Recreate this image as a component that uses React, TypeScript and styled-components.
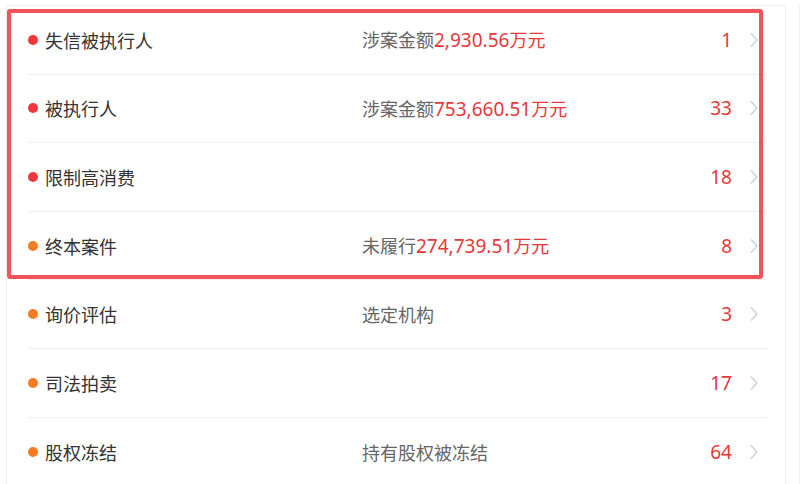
import React from "react";
import styled, { createGlobalStyle } from "styled-components";

const Global = createGlobalStyle`
  html, body { margin: 0; padding: 0; background: #fff; }
  body { font-family: "Noto Sans", "Noto Sans CJK SC", sans-serif; }
`;

const Page = styled.div`
  width: 800px;
  height: 484px;
  overflow: hidden;
  padding: 5px 0 0 6px;
  box-sizing: border-box;
  position: relative;
`;

const Card = styled.div`
  width: 780px;
  border: 1px solid #eeeeee;
  border-radius: 4px;
  background: #fff;
  padding: 0 18px 0 21px;
  box-sizing: border-box;
  display: flex;
  flex-direction: column;
  position: relative;
`;

const Row = styled.div`
  height: 68.6px;
  display: flex;
  align-items: center;
  border-bottom: 1px solid #eeeeee;
  box-sizing: border-box;
  &:last-child { border-bottom: none; }
`;

const Dot = styled.span<{ $color: string }>`
  width: 10px;
  height: 10px;
  border-radius: 50%;
  background: ${(p) => p.$color};
  margin: 0 8px 0 0;
  flex: none;
`;

const Label = styled.span`
  font-size: 18px;
  color: #333;
  width: 317px;
  flex: none;
  margin-left: -1px;
`;

const Info = styled.span`
  font-size: 18px;
  color: #666;
  flex: 1;
  white-space: nowrap;
`;

const Amount = styled.span`
  color: #e5383b;
`;

const Digits = styled.span`
  font-size: 19px;
`;

const Count = styled.span`
  font-size: 19px;
  color: #e5383b;
  margin-right: 18px;
`;

const Chevron = styled.svg`
  width: 8px;
  height: 16px;
  flex: none;
  margin-right: 9px;
`;

const Highlight = styled.div`
  position: absolute;
  left: 7px;
  top: 9px;
  width: 756px;
  height: 270px;
  border: 4px solid #f4535a;
  border-radius: 3px;
  box-sizing: border-box;
  pointer-events: none;
`;

const EdgeLine = styled.div`
  position: absolute;
  right: 0;
  top: 5px;
  bottom: 0;
  width: 1px;
  background: #f0f0f0;
`;

type Item = {
  label: string;
  color: string;
  prefix?: string;
  amount?: string;
  count: string;
};

const RED = "#f0383c";
const ORANGE = "#f77b22";

const items: Item[] = [
  { label: "失信被执行人", color: RED, prefix: "涉案金额", amount: "2,930.56", count: "1" },
  { label: "被执行人", color: RED, prefix: "涉案金额", amount: "753,660.51", count: "33" },
  { label: "限制高消费", color: RED, count: "18" },
  { label: "终本案件", color: ORANGE, prefix: "未履行", amount: "274,739.51", count: "8" },
  { label: "询价评估", color: ORANGE, prefix: "选定机构", count: "3" },
  { label: "司法拍卖", color: ORANGE, count: "17" },
  { label: "股权冻结", color: ORANGE, prefix: "持有股权被冻结", count: "64" },
];

export default function App() {
  return (
    <>
      <Global />
      <Page>
        <Card>
          {items.map((it) => (
            <Row key={it.label}>
              <Dot $color={it.color} />
              <Label>{it.label}</Label>
              <Info>
                {it.prefix}
                {it.amount && (
                  <Amount>
                    <Digits>{it.amount}</Digits>万元
                  </Amount>
                )}
              </Info>
              <Count>{it.count}</Count>
              <Chevron viewBox="0 0 8 16">
                <path d="M1 1.5 L7 8 L1 14.5" fill="none" stroke="#cccccc" strokeWidth="1.2" />
              </Chevron>
            </Row>
          ))}
        </Card>
        <Highlight />
        <EdgeLine />
      </Page>
    </>
  );
}
